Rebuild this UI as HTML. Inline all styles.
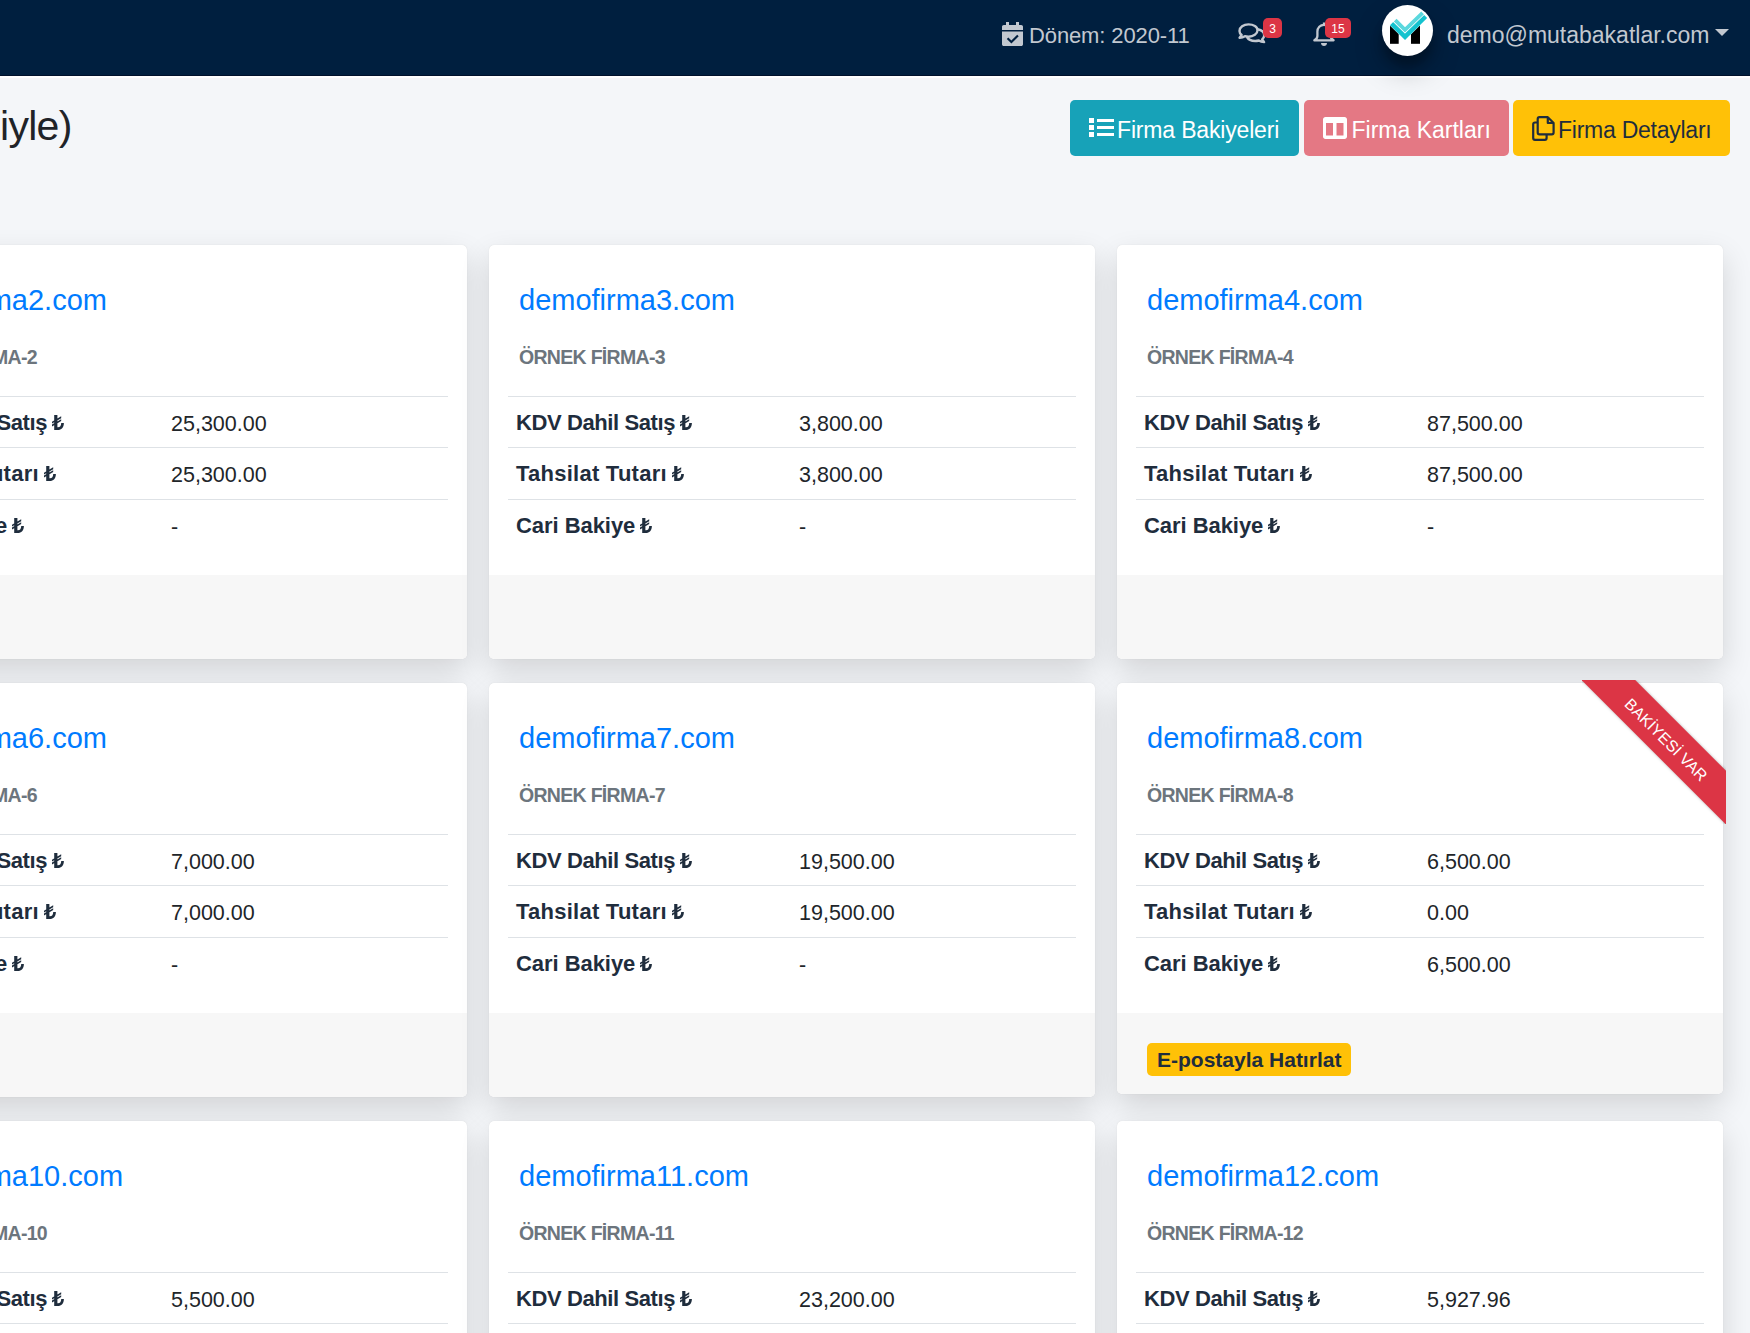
<!DOCTYPE html>
<html><head><meta charset="utf-8">
<style>
*{box-sizing:border-box;margin:0;padding:0}
html,body{width:1750px;height:1333px;overflow:hidden;background:#f4f6f9;font-family:"Liberation Sans",sans-serif;position:relative}
.abs{position:absolute}
.nav{position:absolute;left:0;top:0;width:1750px;height:76px;background:#001f3f;border-bottom:1px solid #00112c}
.navline{position:absolute;left:0;top:76px;width:1750px;height:2px;background:#fff}
.ntxt{position:absolute;color:#c2c8d0;font-size:22px;white-space:nowrap;line-height:1}
.badge{position:absolute;background:#dc3545;color:#fff;border-radius:5px;font-size:12px;line-height:22px;height:20px;text-align:center}
.title{position:absolute;left:0px;top:106px;font-size:41px;letter-spacing:-0.7px;color:#1f2328;line-height:1;white-space:nowrap}
.btn{position:absolute;top:100px;height:56px;border-radius:5px;font-size:23px;line-height:1;white-space:nowrap}
.btn svg{position:absolute}
.btn span{position:absolute}
.card{position:absolute;width:606px;height:414px;background:#fff;border-radius:5px;box-shadow:0 0 1px rgba(0,0,0,.125),0 12px 30px rgba(0,0,0,.14);overflow:visible}
.card .ft{position:absolute;left:0;right:0;top:330px;bottom:0;background:#f7f7f7;border-radius:0 0 5px 5px}
.card .t{position:absolute;left:30px;top:41px;font-size:29px;color:#007bff;line-height:1;white-space:nowrap}
.card .s{position:absolute;left:30px;top:103px;letter-spacing:-0.7px;font-size:19.5px;font-weight:bold;color:#6c757d;line-height:1;white-space:nowrap}
.card .ln{position:absolute;left:19px;width:568px;height:1px;background:#dee2e6}
.card .lb{position:absolute;left:27px;font-size:22px;font-weight:bold;color:#1f2d3d;line-height:1;white-space:nowrap}
.card .v{position:absolute;left:310px;font-size:21.5px;color:#212529;line-height:1;white-space:nowrap}
.rw{position:absolute;right:-3px;top:-3px;width:144px;height:144px;overflow:hidden}
.rb{position:absolute;left:50%;top:50%;width:240px;height:37.5px;margin-left:-120px;margin-top:-18.75px;transform:rotate(45deg) translateY(-18.7px);background:#dc3545;color:#fff;font-size:16px;line-height:42px;text-align:center;box-shadow:0 0 3px rgba(0,0,0,.3);white-space:nowrap}
.eb{position:absolute;left:30px;top:360px;width:204px;height:33px;background:#ffc107;border-radius:5px;font-size:21px;font-weight:bold;color:#1f2d3d;padding-left:10px;line-height:34px;white-space:nowrap}
.tl{display:inline-block;width:12px;height:15px;vertical-align:baseline;margin-left:5px;letter-spacing:0}
</style></head><body>
<svg width="0" height="0" style="position:absolute">
<defs>
<symbol id="tl" viewBox="0 0 12 15"><path d="M2.2 0h3.2v15H2.2z M0 6.7 9.2 1.3v1.9L0 8.6z M0 9.6 9.2 4.2v1.9L0 11.5z M4.6 12.2h1.4c2 0 3.2-1.5 3.2-4.3h2.7c0 4.3-2.5 7.1-6.2 7.1H4.6z" fill="currentColor"/></symbol>
</defs>
</svg>

<!-- NAVBAR -->
<div class="nav"></div>
<div class="navline"></div>

<!-- calendar-check -->
<svg class="abs" style="left:1002px;top:22px" width="21" height="24" viewBox="0 0 21 24">
<path fill="#c2c8d0" d="M4 0h3v3h7V0h3v3h2.2c1 0 1.8.8 1.8 1.8V8H0V4.8C0 3.8.8 3 1.8 3H4z M0 9.5h21v12.7c0 1-.8 1.8-1.8 1.8H1.8C.8 24 0 23.2 0 22.2z"/>
<path fill="#001f3f" d="M15.2 12.8l1.5 1.5-7.3 7.2-4.6-4.6 1.5-1.5 3.1 3.1z"/>
</svg>
<div class="ntxt" style="left:1029px;top:25px;letter-spacing:-0.12px">Dönem: 2020-11</div>

<!-- comments -->
<svg class="abs" style="left:1238px;top:23px" width="28" height="22" viewBox="0 0 28 22">
<g fill="none" stroke="#c2c8d0" stroke-width="2.4" stroke-linejoin="round">
<path d="M10.5 1.4c-5 0-9 2.9-9 6.5 0 1.6.8 3 2.1 4.1L1.6 14.8c2.4 0 4.2-.8 5.3-1.6 1.1.3 2.3.5 3.6.5 5 0 9-2.8 9-6.4s-4-5.9-9-5.9z"/>
<path d="M19.6 6.2c3.9.7 6.6 3.1 6.6 6 0 1.6-.8 3-2.1 4.1l2 2.8c-2.4 0-4.2-.8-5.3-1.6-1.1.3-2.3.5-3.6.5-3.9 0-7.1-1.7-8.4-4.1"/>
</g>
</svg>
<div class="badge" style="left:1263px;top:18px;width:19px">3</div>

<!-- bell -->
<svg class="abs" style="left:1313px;top:22px" width="22" height="25" viewBox="0 0 22 25">
<g fill="none" stroke="#c2c8d0" stroke-width="2.3" stroke-linejoin="round">
<path d="M11 0.6v2.2M11 2.8c-3.8 0-6.6 3-6.6 6.8v4.3c0 1.7-1 3.1-3 4.4h19.2c-2-1.3-3-2.7-3-4.4v-4.3c0-3.8-2.8-6.8-6.6-6.8z"/>
</g>
<path fill="#c2c8d0" d="M8 21h6c0 1.8-1.3 3-3 3s-3-1.2-3-3z"/>
</svg>
<div class="badge" style="left:1325px;top:18px;width:26px">15</div>

<!-- avatar -->
<div class="abs" style="left:1382px;top:5px;width:51px;height:51px;border-radius:50%;background:#fff;box-shadow:0 14px 28px rgba(0,0,0,.25),0 10px 10px rgba(0,0,0,.22)"></div>
<svg class="abs" style="left:1378px;top:0px" width="60" height="60" viewBox="0 0 60 60">
<rect x="12" y="25.2" width="8.7" height="18.6" fill="#000"/>
<rect x="33" y="25.2" width="9" height="18.6" fill="#000"/>
<polyline points="13.6,23.6 27,36.7 47.5,16.3" fill="none" stroke="#fff" stroke-width="5.2"/>
<polyline points="13.6,23.6 27,36.7 47.5,16.3" fill="none" stroke="#14c3cf" stroke-width="4.6"/>
<polyline points="17.2,20.1 27,29.9 44.6,12.8" fill="none" stroke="#fff" stroke-width="5.2"/>
<polyline points="17.2,20.1 27,29.9 44.6,12.8" fill="none" stroke="#5ad8de" stroke-width="3.8"/>
</svg>
<div class="ntxt" style="left:1447px;top:24px;font-size:23px">demo@mutabakatlar.com</div>
<svg class="abs" style="left:1715px;top:29px" width="14" height="7" viewBox="0 0 14 7"><path d="M0 0h14L7 7z" fill="#c2c8d0"/></svg>

<!-- TITLE -->
<div class="title">iyle)</div>

<!-- BUTTONS -->
<div class="btn" style="left:1070px;width:229px;background:#17a2b8;color:#fff">
<svg style="left:19px;top:18px" width="25" height="19" viewBox="0 0 25 19" fill="#fff">
<rect x="0" y="0" width="5" height="5"/><rect x="0" y="7" width="5" height="5"/><rect x="0" y="14" width="5" height="5"/>
<rect x="8" y="1" width="17" height="3"/><rect x="8" y="8" width="17" height="3"/><rect x="8" y="15" width="17" height="3"/>
</svg>
<span style="left:47px;top:19px;letter-spacing:-0.17px">Firma Bakiyeleri</span>
</div>
<div class="btn" style="left:1304px;width:205px;background:#e47884;color:#fff">
<svg style="left:19px;top:17px" width="24" height="22" viewBox="0 0 24 22">
<path fill="#fff" fill-rule="evenodd" d="M2.5 0h19C22.9 0 24 1.1 24 2.5v17c0 1.4-1.1 2.5-2.5 2.5h-19C1.1 22 0 20.9 0 19.5v-17C0 1.1 1.1 0 2.5 0z M3 6v12.5h7V6z M13.5 6v12.5h7V6z"/>
</svg>
<span style="left:47.5px;top:19px">Firma Kartları</span>
</div>
<div class="btn" style="left:1513px;width:217px;background:#ffc107;color:#1f2d3d">
<svg style="left:19px;top:16px" width="23" height="25" viewBox="0 0 23 25">
<g fill="none" stroke="#1f2d3d" stroke-width="2.2" stroke-linejoin="round">
<path d="M7.5 1.2h8.3l5.8 5.8v9.5c0 1-.8 1.8-1.8 1.8H7.5c-1 0-1.8-.8-1.8-1.8V3c0-1 .8-1.8 1.8-1.8z"/>
<path d="M15.8 1.2v5.8h5.8"/>
<path d="M5.7 6.5H3c-1 0-1.8.8-1.8 1.8v13.7c0 1 .8 1.8 1.8 1.8h9.8c1 0 1.8-.8 1.8-1.8v-3.2"/>
</g>
</svg>
<span style="left:45px;top:19px;letter-spacing:-0.25px">Firma Detayları</span>
</div>

<!-- CARDS -->
<div class="card" style="left:-139px;top:245px;height:414px"><div class="ft"></div><div class="t">demofirma2.com</div><div class="s">ÖRNEK FİRMA-2</div><div class="ln" style="top:151px"></div><div class="ln" style="top:202px"></div><div class="ln" style="top:254px"></div><div class="lb" style="top:167px;letter-spacing:-0.4px">KDV Dahil Satış<svg class="tl"><use href="#tl"/></svg></div><div class="v" style="top:169px">25,300.00</div><div class="lb" style="top:218px;letter-spacing:0.25px">Tahsilat Tutarı<svg class="tl"><use href="#tl"/></svg></div><div class="v" style="top:220px">25,300.00</div><div class="lb" style="top:270px;letter-spacing:-0.05px">Cari Bakiye<svg class="tl"><use href="#tl"/></svg></div><div class="v" style="top:272px">-</div></div>
<div class="card" style="left:489px;top:245px;height:414px"><div class="ft"></div><div class="t">demofirma3.com</div><div class="s">ÖRNEK FİRMA-3</div><div class="ln" style="top:151px"></div><div class="ln" style="top:202px"></div><div class="ln" style="top:254px"></div><div class="lb" style="top:167px;letter-spacing:-0.4px">KDV Dahil Satış<svg class="tl"><use href="#tl"/></svg></div><div class="v" style="top:169px">3,800.00</div><div class="lb" style="top:218px;letter-spacing:0.25px">Tahsilat Tutarı<svg class="tl"><use href="#tl"/></svg></div><div class="v" style="top:220px">3,800.00</div><div class="lb" style="top:270px;letter-spacing:-0.05px">Cari Bakiye<svg class="tl"><use href="#tl"/></svg></div><div class="v" style="top:272px">-</div></div>
<div class="card" style="left:1117px;top:245px;height:414px"><div class="ft"></div><div class="t">demofirma4.com</div><div class="s">ÖRNEK FİRMA-4</div><div class="ln" style="top:151px"></div><div class="ln" style="top:202px"></div><div class="ln" style="top:254px"></div><div class="lb" style="top:167px;letter-spacing:-0.4px">KDV Dahil Satış<svg class="tl"><use href="#tl"/></svg></div><div class="v" style="top:169px">87,500.00</div><div class="lb" style="top:218px;letter-spacing:0.25px">Tahsilat Tutarı<svg class="tl"><use href="#tl"/></svg></div><div class="v" style="top:220px">87,500.00</div><div class="lb" style="top:270px;letter-spacing:-0.05px">Cari Bakiye<svg class="tl"><use href="#tl"/></svg></div><div class="v" style="top:272px">-</div></div>
<div class="card" style="left:-139px;top:683px;height:414px"><div class="ft"></div><div class="t">demofirma6.com</div><div class="s">ÖRNEK FİRMA-6</div><div class="ln" style="top:151px"></div><div class="ln" style="top:202px"></div><div class="ln" style="top:254px"></div><div class="lb" style="top:167px;letter-spacing:-0.4px">KDV Dahil Satış<svg class="tl"><use href="#tl"/></svg></div><div class="v" style="top:169px">7,000.00</div><div class="lb" style="top:218px;letter-spacing:0.25px">Tahsilat Tutarı<svg class="tl"><use href="#tl"/></svg></div><div class="v" style="top:220px">7,000.00</div><div class="lb" style="top:270px;letter-spacing:-0.05px">Cari Bakiye<svg class="tl"><use href="#tl"/></svg></div><div class="v" style="top:272px">-</div></div>
<div class="card" style="left:489px;top:683px;height:414px"><div class="ft"></div><div class="t">demofirma7.com</div><div class="s">ÖRNEK FİRMA-7</div><div class="ln" style="top:151px"></div><div class="ln" style="top:202px"></div><div class="ln" style="top:254px"></div><div class="lb" style="top:167px;letter-spacing:-0.4px">KDV Dahil Satış<svg class="tl"><use href="#tl"/></svg></div><div class="v" style="top:169px">19,500.00</div><div class="lb" style="top:218px;letter-spacing:0.25px">Tahsilat Tutarı<svg class="tl"><use href="#tl"/></svg></div><div class="v" style="top:220px">19,500.00</div><div class="lb" style="top:270px;letter-spacing:-0.05px">Cari Bakiye<svg class="tl"><use href="#tl"/></svg></div><div class="v" style="top:272px">-</div></div>
<div class="card" style="left:1117px;top:683px;height:411px"><div class="ft"></div><div class="t">demofirma8.com</div><div class="s">ÖRNEK FİRMA-8</div><div class="ln" style="top:151px"></div><div class="ln" style="top:202px"></div><div class="ln" style="top:254px"></div><div class="lb" style="top:167px;letter-spacing:-0.4px">KDV Dahil Satış<svg class="tl"><use href="#tl"/></svg></div><div class="v" style="top:169px">6,500.00</div><div class="lb" style="top:218px;letter-spacing:0.25px">Tahsilat Tutarı<svg class="tl"><use href="#tl"/></svg></div><div class="v" style="top:220px">0.00</div><div class="lb" style="top:270px;letter-spacing:-0.05px">Cari Bakiye<svg class="tl"><use href="#tl"/></svg></div><div class="v" style="top:272px">6,500.00</div><div class="rw"><div class="rb">BAKİYESİ VAR</div></div><div class="eb">E-postayla Hatırlat</div></div>
<div class="card" style="left:-139px;top:1121px;height:414px"><div class="ft"></div><div class="t">demofirma10.com</div><div class="s">ÖRNEK FİRMA-10</div><div class="ln" style="top:151px"></div><div class="ln" style="top:202px"></div><div class="ln" style="top:254px"></div><div class="lb" style="top:167px;letter-spacing:-0.4px">KDV Dahil Satış<svg class="tl"><use href="#tl"/></svg></div><div class="v" style="top:169px">5,500.00</div><div class="lb" style="top:218px;letter-spacing:0.25px">Tahsilat Tutarı<svg class="tl"><use href="#tl"/></svg></div><div class="v" style="top:220px"></div><div class="lb" style="top:270px;letter-spacing:-0.05px">Cari Bakiye<svg class="tl"><use href="#tl"/></svg></div><div class="v" style="top:272px"></div></div>
<div class="card" style="left:489px;top:1121px;height:414px"><div class="ft"></div><div class="t">demofirma11.com</div><div class="s">ÖRNEK FİRMA-11</div><div class="ln" style="top:151px"></div><div class="ln" style="top:202px"></div><div class="ln" style="top:254px"></div><div class="lb" style="top:167px;letter-spacing:-0.4px">KDV Dahil Satış<svg class="tl"><use href="#tl"/></svg></div><div class="v" style="top:169px">23,200.00</div><div class="lb" style="top:218px;letter-spacing:0.25px">Tahsilat Tutarı<svg class="tl"><use href="#tl"/></svg></div><div class="v" style="top:220px"></div><div class="lb" style="top:270px;letter-spacing:-0.05px">Cari Bakiye<svg class="tl"><use href="#tl"/></svg></div><div class="v" style="top:272px"></div></div>
<div class="card" style="left:1117px;top:1121px;height:414px"><div class="ft"></div><div class="t">demofirma12.com</div><div class="s">ÖRNEK FİRMA-12</div><div class="ln" style="top:151px"></div><div class="ln" style="top:202px"></div><div class="ln" style="top:254px"></div><div class="lb" style="top:167px;letter-spacing:-0.4px">KDV Dahil Satış<svg class="tl"><use href="#tl"/></svg></div><div class="v" style="top:169px">5,927.96</div><div class="lb" style="top:218px;letter-spacing:0.25px">Tahsilat Tutarı<svg class="tl"><use href="#tl"/></svg></div><div class="v" style="top:220px"></div><div class="lb" style="top:270px;letter-spacing:-0.05px">Cari Bakiye<svg class="tl"><use href="#tl"/></svg></div><div class="v" style="top:272px"></div></div>
</body></html>
